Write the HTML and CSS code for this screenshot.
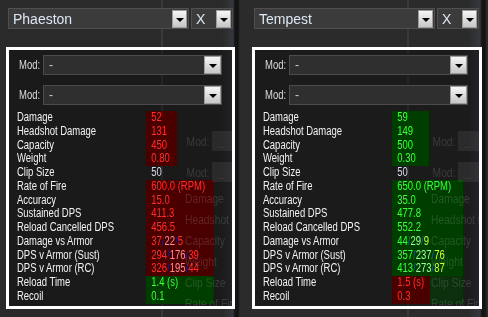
FILE: index.html
```html
<!DOCTYPE html>
<html lang="en">
<head>
  <meta charset="UTF-8">
  <title>Weapon Compare</title>
  <link rel="stylesheet" href="styles.css">
</head>
<body>
  <div class="screen">
    <section class="col col-left">
      <div class="head">
        <div class="pick"><span>Phaeston</span><span class="drop"></span></div>
        <div class="pick pick-x"><span>X</span><span class="drop"></span></div>
      </div>
      <div class="panel">
        <div class="mod"><span class="mod-label">Mod:</span><div class="mod-pick"><span>-</span><span class="drop"></span></div></div>
        <div class="mod"><span class="mod-label">Mod:</span><div class="mod-pick"><span>-</span><span class="drop"></span></div></div>
        <div class="stats">
          <div class="row"><span class="lbl">Damage</span><span class="val bad w-a">52</span></div>
          <div class="row"><span class="lbl">Headshot Damage</span><span class="val bad w-a">131</span></div>
          <div class="row"><span class="lbl">Capacity</span><span class="val bad w-a">450</span></div>
          <div class="row"><span class="lbl">Weight</span><span class="val bad w-a">0.80</span></div>
          <div class="row"><span class="lbl">Clip Size</span><span class="val plain">50</span></div>
          <div class="row"><span class="lbl">Rate of Fire</span><span class="val bad w-b">600.0 (RPM)</span></div>
          <div class="row"><span class="lbl">Accuracy</span><span class="val bad w-b">15.0</span></div>
          <div class="row"><span class="lbl">Sustained DPS</span><span class="val bad w-b">411.3</span></div>
          <div class="row"><span class="lbl">Reload Cancelled DPS</span><span class="val bad w-b">456.5</span></div>
          <div class="row"><span class="lbl">Damage vs Armor</span><span class="val bad w-b"><span>37</span><span class="sep">/</span><span class="hi">22</span><span class="sep">/</span><span>5</span></span></div>
          <div class="row"><span class="lbl">DPS v Armor (Sust)</span><span class="val bad w-b"><span>294</span><span class="sep">/</span><span class="hi">176</span><span class="sep">/</span><span>39</span></span></div>
          <div class="row"><span class="lbl">DPS v Armor (RC)</span><span class="val bad w-b"><span>326</span><span class="sep">/</span><span class="hi">195</span><span class="sep">/</span><span>44</span></span></div>
          <div class="row"><span class="lbl">Reload Time</span><span class="val good w-b">1.4 (s)</span></div>
          <div class="row"><span class="lbl">Recoil</span><span class="val good w-b">0.1</span></div>
        </div>
        <div class="ghost">
          <div class="g-mod"><span class="g-lbl">Mod:</span><span class="g-box">_</span></div>
          <div class="g-mod"><span class="g-lbl">Mod:</span><span class="g-box">_</span></div>
          <div class="g-list">
            <div>Damage</div>
            <div>Headshot Damage</div>
            <div>Capacity</div>
            <div>Weight</div>
            <div>Clip Size</div>
            <div>Rate of Fire</div>
          </div>
        </div>
      </div>
    </section>

    <section class="col col-right">
      <div class="head">
        <div class="pick"><span>Tempest</span><span class="drop"></span></div>
        <div class="pick pick-x"><span>X</span><span class="drop"></span></div>
      </div>
      <div class="panel">
        <div class="mod"><span class="mod-label">Mod:</span><div class="mod-pick"><span>-</span><span class="drop"></span></div></div>
        <div class="mod"><span class="mod-label">Mod:</span><div class="mod-pick"><span>-</span><span class="drop"></span></div></div>
        <div class="stats">
          <div class="row"><span class="lbl">Damage</span><span class="val good w-c">59</span></div>
          <div class="row"><span class="lbl">Headshot Damage</span><span class="val good w-c">149</span></div>
          <div class="row"><span class="lbl">Capacity</span><span class="val good w-c">500</span></div>
          <div class="row"><span class="lbl">Weight</span><span class="val good w-c">0.30</span></div>
          <div class="row"><span class="lbl">Clip Size</span><span class="val plain">50</span></div>
          <div class="row"><span class="lbl">Rate of Fire</span><span class="val good w-d">650.0 (RPM)</span></div>
          <div class="row"><span class="lbl">Accuracy</span><span class="val good w-d">35.0</span></div>
          <div class="row"><span class="lbl">Sustained DPS</span><span class="val good w-d">477.8</span></div>
          <div class="row"><span class="lbl">Reload Cancelled DPS</span><span class="val good w-d">552.2</span></div>
          <div class="row"><span class="lbl">Damage vs Armor</span><span class="val good w-d"><span>44</span><span class="sep">/</span><span class="hi">29</span><span class="sep">/</span><span class="lo">9</span></span></div>
          <div class="row"><span class="lbl">DPS v Armor (Sust)</span><span class="val good w-d"><span>357</span><span class="sep">/</span><span class="hi">237</span><span class="sep">/</span><span class="lo">76</span></span></div>
          <div class="row"><span class="lbl">DPS v Armor (RC)</span><span class="val good w-d"><span>413</span><span class="sep">/</span><span class="hi">273</span><span class="sep">/</span><span class="lo">87</span></span></div>
          <div class="row"><span class="lbl">Reload Time</span><span class="val bad w-e">1.5 (s)</span></div>
          <div class="row"><span class="lbl">Recoil</span><span class="val bad w-e">0.3</span></div>
        </div>
        <div class="ghost">
          <div class="g-mod"><span class="g-lbl">Mod:</span><span class="g-box">_</span></div>
          <div class="g-mod"><span class="g-lbl">Mod:</span><span class="g-box">_</span></div>
          <div class="g-list">
            <div>Damage</div>
            <div>Headshot Damage</div>
            <div>Capacity</div>
            <div>Weight</div>
            <div>Clip Size</div>
            <div>Rate of Fire</div>
          </div>
        </div>
      </div>
    </section>
  </div>
</body>
</html>
```

FILE: styles.css
```css
body {
  margin: 0;
  width: 488px;
  height: 317px;
  overflow: hidden;
  font-family: "Liberation Sans", Arial, sans-serif;
  background: linear-gradient(to right,
    #2a2a2a 0 161px, #3a3a3a 161px 163px, #2a2a2a 163px 222px,
    #34373f 233px, #131313 235px 238px, #2b2b2b 240px 407px,
    #3a3a3a 407px 409px, #2b2b2b 409px 468px,
    #35383f 480px, #131313 482px 485px, #2b2b2b 487px);
}
.screen {
  display: flex;
  gap: 17px;
  padding: 8px 0 0 6px;
}
.col { display: flex; flex-direction: column; }
.col-left { width: 229px; }
.col-right { width: 230px; }

/* top weapon pickers */
.head { display: flex; gap: 2px; padding-left: 2px; height: 21px; }
.pick {
  box-sizing: border-box;
  width: 181px;
  height: 21px;
  display: flex;
  align-items: center;
  justify-content: space-between;
  padding: 0 1px 0 4px;
  background: #3b3b3b;
  border: 1px solid #4f4f4f;
  font-size: 14px;
  color: #dde7f4;
}
.pick-x { width: 42px; }
.drop {
  box-sizing: border-box;
  width: 15px;
  height: 18px;
  display: flex;
  align-items: center;
  justify-content: center;
  background: linear-gradient(#f6f6f6, #c6c6c6);
  border: 1px solid #9c9c9c;
}
.drop::after {
  content: "";
  margin-top: 2px;
  border-left: 4px solid transparent;
  border-right: 4px solid transparent;
  border-top: 4px solid #000;
}

/* stats panel */
.panel {
  position: relative;
  overflow: hidden;
  box-sizing: border-box;
  height: 262px;
  margin-top: 18px;
  padding-top: 5px;
  border: 3px solid #fff;
  background: rgba(0, 0, 0, 0.36);
}
.mod { display: flex; align-items: center; height: 20px; padding-left: 10px; }
.mod + .mod { margin-top: 10px; }
/* the game font is narrow: squeeze Liberation Sans to its width */
.mod-label {
  display: inline-block;
  width: 24px;
  white-space: nowrap;
  font-size: 12px;
  color: #dcdcdc;
  transform: scaleX(0.79);
  transform-origin: left center;
}
.mod-pick {
  box-sizing: border-box;
  width: 179px;
  height: 20px;
  display: flex;
  align-items: center;
  justify-content: space-between;
  padding-left: 5px;
  background: #2f2f2f;
  border: 1px solid #4b4b4b;
  font-size: 12px;
  color: #cfcfcf;
}
.mod-pick .drop { width: 17px; }

/* widths below are before the 0.79 squeeze */
.stats {
  width: 280px;
  margin: 6px 0 0 8px;
  transform: scaleX(0.79);
  transform-origin: left top;
}
.row { display: flex; height: 13.75px; line-height: 13.75px; font-size: 12px; }
.lbl { width: 163px; flex: none; color: #f2f2f2; white-space: nowrap; }
.val { box-sizing: border-box; flex: none; padding-left: 7px; white-space: nowrap; }
.bad { background: #4b0000; color: #ff2e2e; }
.good { background: #003e00; color: #3cff3c; }
.plain { color: #d8dcea; }
.bad .hi { color: #ff8c96; }
.good .hi { color: #9cff9c; }
.good .lo { color: #c8ff3a; }
.bad .sep { color: #1c1c9c; }
.good .sep { color: #1d5f88; }

.w-a { width: 39px; }
.w-b { width: 86px; }
.w-c { width: 47px; }
.w-d { width: 90px; }
.w-e {
  width: 90px;
  background: linear-gradient(to right, #4b0000 0 49px, #0c2f0c 49px);
}

/* faint reflection of the panel behind */
.ghost {
  position: absolute;
  left: 176px;
  top: 81px;
  width: 140px;
  pointer-events: none;
  mix-blend-mode: screen;
  color: #232323;
  font-size: 13px;
  white-space: nowrap;
  transform: scaleX(0.79);
  transform-origin: left top;
}
.g-mod { display: flex; align-items: center; height: 20px; padding-left: 2px; }
.g-mod + .g-mod { margin-top: 11px; }
.g-lbl { width: 32px; }
.g-box {
  flex: 1;
  height: 20px;
  line-height: 20px;
  padding-left: 8px;
  background: #121212;
}
.g-list { margin-top: 6px; line-height: 21px; }
```
